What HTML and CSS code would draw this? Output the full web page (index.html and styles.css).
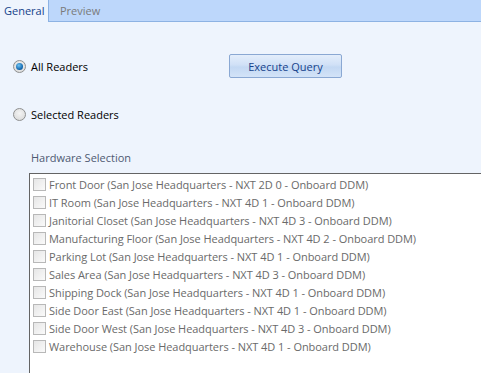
FILE: index.html
```html
<!DOCTYPE html>
<html>
<head>
<meta charset="utf-8">
<link rel="stylesheet" href="styles.css">
</head>
<body>
<div class="tabs">
  <div class="tab active">General</div>
  <div class="tab">Preview</div>
  <div class="tab-fill"></div>
</div>
<div class="content">
  <div class="row-top">
    <label class="radio"><span class="rb checked"></span>All Readers</label>
    <button class="btn">Execute Query</button>
  </div>
  <label class="radio second"><span class="rb"></span>Selected Readers</label>
  <div class="hw-label">Hardware Selection</div>
  <div class="listbox">
    <div class="item"><span class="cb"></span>Front Door (San Jose Headquarters - NXT 2D 0 - Onboard DDM)</div>
    <div class="item"><span class="cb"></span>IT Room (San Jose Headquarters - NXT 4D 1 - Onboard DDM)</div>
    <div class="item"><span class="cb"></span>Janitorial Closet (San Jose Headquarters - NXT 4D 3 - Onboard DDM)</div>
    <div class="item"><span class="cb"></span>Manufacturing Floor (San Jose Headquarters - NXT 4D 2 - Onboard DDM)</div>
    <div class="item"><span class="cb"></span>Parking Lot (San Jose Headquarters - NXT 4D 1 - Onboard DDM)</div>
    <div class="item"><span class="cb"></span>Sales Area (San Jose Headquarters - NXT 4D 3 - Onboard DDM)</div>
    <div class="item"><span class="cb"></span>Shipping Dock (San Jose Headquarters - NXT 4D 1 - Onboard DDM)</div>
    <div class="item"><span class="cb"></span>Side Door East (San Jose Headquarters - NXT 4D 1 - Onboard DDM)</div>
    <div class="item"><span class="cb"></span>Side Door West (San Jose Headquarters - NXT 4D 3 - Onboard DDM)</div>
    <div class="item"><span class="cb"></span>Warehouse (San Jose Headquarters - NXT 4D 1 - Onboard DDM)</div>
  </div>
</div>
</body>
</html>
```

FILE: styles.css
```css
html, body {
  margin: 0;
  padding: 0;
  width: 481px;
  height: 373px;
  overflow: hidden;
  background: #eef4fd;
  font-family: "Open Sans", "Noto Sans", sans-serif;
  font-size: 11px;
}
.tabs {
  display: flex;
  height: 22px;
  background: #bdd7fb;
}
.tab {
  box-sizing: border-box;
  height: 22px;
  line-height: 22px;
  padding: 0 0 0 4px;
  color: #7a7a7a;
  border-bottom: 1px solid #8db2e3;
}
.tab.active {
  width: 49px;
  background: #eef4fd;
  color: #15428b;
  border-right: 1px solid #8db2e3;
  border-bottom: none;
}
.tab:nth-child(2) {
  width: 60px;
  padding-left: 11px;
}
.tab-fill {
  flex: 1;
  border-bottom: 1px solid #8db2e3;
}
.content {
  padding: 0 0 0 13px;
}
.row-top {
  display: flex;
  align-items: center;
  height: 24px;
  margin-top: 32px;
}
.radio {
  display: flex;
  align-items: center;
  color: #000;
  width: 216px;
}
.radio.second {
  margin-top: 24px;
  height: 24px;
}
.rb {
  box-sizing: border-box;
  width: 13px;
  height: 13px;
  border-radius: 50%;
  border: 1px solid #8e8f8f;
  background: radial-gradient(circle at 50% 40%, #f4f4f4, #d6d6d6);
  margin-right: 5px;
  position: relative;
}
.rb.checked::after {
  content: "";
  position: absolute;
  left: 2px;
  top: 2px;
  width: 7px;
  height: 7px;
  border-radius: 50%;
  background: radial-gradient(circle at 40% 35%, #6fc4f4, #0b5fa8 70%, #0a3f78);
}
.btn {
  box-sizing: border-box;
  width: 113px;
  height: 24px;
  font-family: inherit;
  font-size: 11px;
  color: #15428b;
  border: 1px solid #8aa8d3;
  border-radius: 2px;
  background: linear-gradient(#e4eefb, #d0e0f6 45%, #c3d8f3 55%, #d3e3f8);
  padding: 0;
}
.hw-label {
  margin-top: 24px;
  margin-left: 18px;
  color: #4e5a72;
  height: 23px;
  line-height: 16px;
}
.listbox {
  box-sizing: border-box;
  margin-left: 16px;
  width: 470px;
  height: 200px;
  background: #fff;
  border: 1px solid #646464;
  border-right: none;
  border-bottom: none;
  padding-top: 1px;
  letter-spacing: -0.05px;
}
.item {
  display: flex;
  align-items: center;
  height: 18px;
  padding-left: 3px;
  color: #6a6a6a;
  white-space: nowrap;
}
.cb {
  box-sizing: border-box;
  width: 13px;
  height: 13px;
  border: 1px solid #b8b8b8;
  background: linear-gradient(135deg, #e6e6e6, #fafafa);
  margin-right: 3px;
  flex: none;
}
```
